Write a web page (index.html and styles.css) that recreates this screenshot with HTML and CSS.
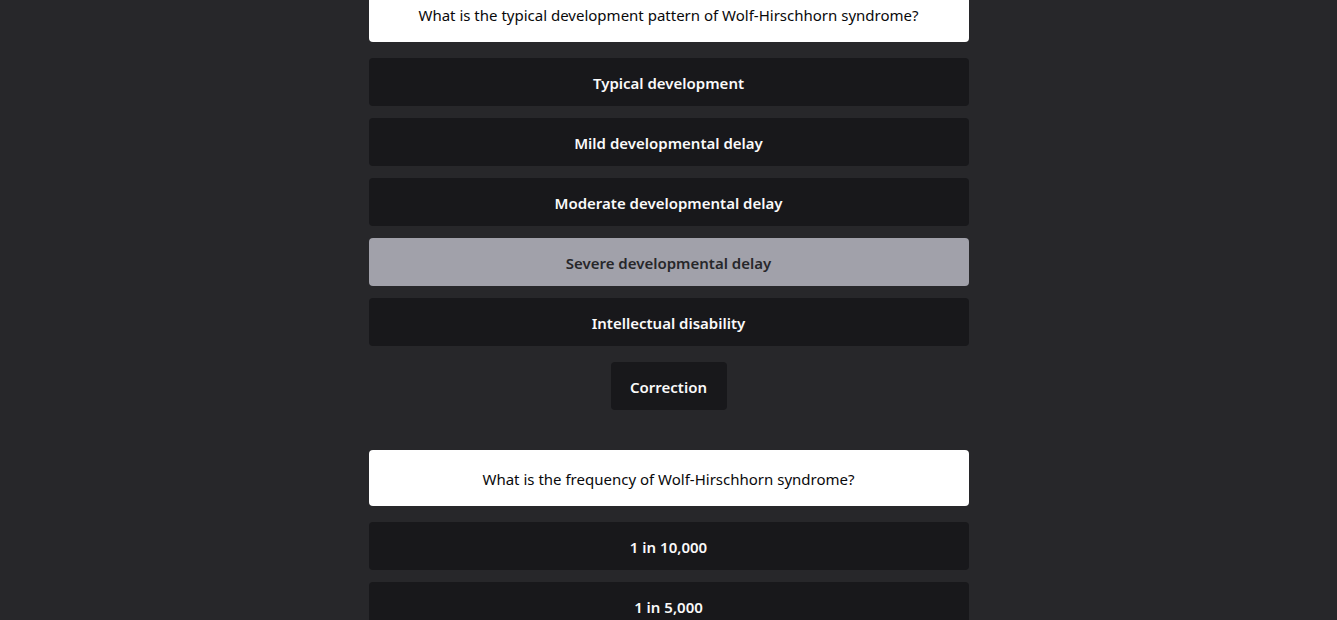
FILE: index.html
```html
<!DOCTYPE html>
<html lang="en">
<head>
<meta charset="utf-8">
<title>Quiz</title>
<link rel="stylesheet" href="styles.css">
</head>
<body>
<main class="quiz">
  <section class="question-block">
    <div class="question">What is the typical development pattern of Wolf-Hirschhorn syndrome?</div>
    <div class="options">
      <button class="option">Typical development</button>
      <button class="option">Mild developmental delay</button>
      <button class="option">Moderate developmental delay</button>
      <button class="option selected">Severe developmental delay</button>
      <button class="option">Intellectual disability</button>
    </div>
    <button class="correction">Correction</button>
  </section>
  <section class="question-block">
    <div class="question">What is the frequency of Wolf-Hirschhorn syndrome?</div>
    <div class="options">
      <button class="option">1 in 10,000</button>
      <button class="option">1 in 5,000</button>
      <button class="option">1 in 50,000</button>
    </div>
  </section>
</main>
</body>
</html>
```
FILE: styles.css
```css
html, body {
  margin: 0;
  padding: 0;
  background: #27272a;
  font-family: "Noto Sans", "Open Sans", sans-serif;
  overflow: hidden;
}
.quiz {
  width: 600px;
  margin: -14px auto 0;
  display: flex;
  flex-direction: column;
  gap: 40px;
}
.question-block {
  display: flex;
  flex-direction: column;
  align-items: center;
}
.question {
  align-self: stretch;
  background: #ffffff;
  color: #09090b;
  border-radius: 4px;
  padding: 17px 16px 15px;
  font-size: 15px;
  line-height: 24px;
  text-align: center;
}
.options {
  align-self: stretch;
  display: flex;
  flex-direction: column;
  gap: 12px;
  margin-top: 16px;
}
.option, .correction {
  font-family: inherit;
  border: none;
  border-radius: 4px;
  background: #18181b;
  color: #fafafa;
  font-size: 15px;
  font-weight: 600;
  line-height: 24px;
  height: 48px;
  padding: 2px 20px 0;
  text-align: center;
}
.option.selected {
  background: #a1a1aa;
  color: #27272a;
}
.correction {
  margin-top: 16px;
  width: 116px;
  padding: 2px 0 0;
}
```
